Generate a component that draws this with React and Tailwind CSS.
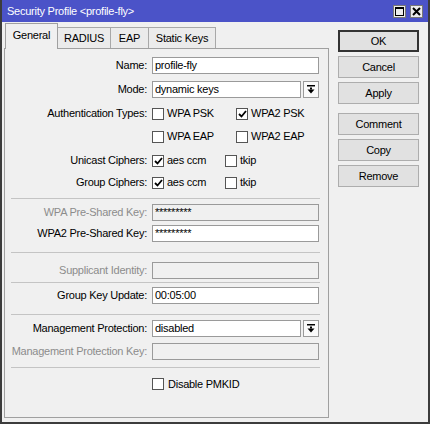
import React from "react";

const DropIcon = () => (
  <svg width="8" height="9" viewBox="0 0 8 9">
    <rect x="0" y="0" width="8" height="1.5" fill="#000" />
    <rect x="3" y="2.5" width="2" height="2" fill="#000" />
    <polygon points="0.5,4.5 7.5,4.5 4,8.5" fill="#000" />
  </svg>
);

const Check = ({ checked }) => (
  <div className="w-[12px] h-[12px] bg-white border border-[#555] flex items-center justify-center shrink-0">
    {checked && (
      <svg width="9" height="8" viewBox="0 0 9 8">
        <polyline points="1,4 3.5,6.5 8,1" fill="none" stroke="#000" strokeWidth="1.8" />
      </svg>
    )}
  </div>
);

const Label = ({ children, disabled }) => (
  <div className={`w-[143px] text-right pr-[1px] whitespace-nowrap ${disabled ? "text-[#8c8c8c]" : "text-black"}`}>
    {children}
  </div>
);

const Field = ({ label, value, disabled, drop, mt }) => (
  <div className={`flex items-center h-[17px] ${mt}`}>
    <Label disabled={disabled}>{label}</Label>
    <div className="ml-[4px] flex w-[167px] h-[17px]">
      <div
        className={`flex-1 h-full border border-[#9a9a9a] px-[2px] flex items-center leading-none ${
          disabled ? "bg-[#f0f0f0]" : "bg-white"
        }`}
      >
        {value}
      </div>
      {drop && (
        <div className="ml-[2px] w-[16px] h-full border border-[#9a9a9a] bg-[#fafafa] flex items-center justify-center">
          <DropIcon />
        </div>
      )}
    </div>
  </div>
);

const CheckRow = ({ label, items, mt }) => (
  <div className={`flex items-center h-[17px] ${mt}`}>
    <Label>{label}</Label>
    <div className="ml-[4px] flex items-center">
      {items.map((it) => (
        <div key={it.text} className={`flex items-center ${it.w}`}>
          <Check checked={it.checked} />
          <span className="ml-[3px] whitespace-nowrap">{it.text}</span>
        </div>
      ))}
    </div>
  </div>
);

const Sep = ({ mt }) => <div className={`ml-[6px] w-[309px] h-px bg-[#c4c4c4] ${mt}`} />;

const tabs = [
  { name: "General", w: "w-[53px]", active: true },
  { name: "RADIUS", w: "w-[54px] -ml-px" },
  { name: "EAP", w: "w-[39px] -ml-px" },
  { name: "Static Keys", w: "w-[68px] -ml-px" },
];

const buttons = [
  { name: "OK", mt: "", ok: true },
  { name: "Cancel", mt: "mt-[4px]" },
  { name: "Apply", mt: "mt-[4px]" },
  { name: "Comment", mt: "mt-[9px]" },
  { name: "Copy", mt: "mt-[4px]" },
  { name: "Remove", mt: "mt-[4px]" },
];

export default function App() {
  return (
    <div className="w-[430px] h-[424px] bg-[#f0f0f0] border-x-2 border-b-2 border-[#3c3c3c] flex flex-col font-['Liberation_Sans',Arial,sans-serif] text-[11px] tracking-[-0.25px] text-black overflow-hidden">
      {/* title bar */}
      <div className="h-[22px] bg-[#4b53c8] flex items-center shrink-0">
        <span className="ml-[5px] text-white whitespace-nowrap">Security Profile &lt;profile-fly&gt;</span>
        <div className="ml-auto mr-[5px] flex items-center gap-[4px]">
          <div className="w-[13px] h-[13px] bg-[#ececec] border border-[#777] flex items-center justify-center">
            <svg width="9" height="9" viewBox="0 0 9 9">
              <rect x="0.5" y="0.5" width="8" height="8" fill="none" stroke="#000" strokeWidth="1" />
              <rect x="0" y="0" width="9" height="2" fill="#000" />
            </svg>
          </div>
          <div className="w-[13px] h-[13px] bg-[#ececec] border border-[#777] flex items-center justify-center">
            <svg width="9" height="9" viewBox="0 0 9 9">
              <path d="M1 1 L8 8 M8 1 L1 8" stroke="#000" strokeWidth="2" />
            </svg>
          </div>
        </div>
      </div>

      <div className="flex flex-1">
        {/* left: tabs + panel */}
        <div className="ml-[2px] w-[325px] flex flex-col">
          <div className="h-[26px] flex items-end pl-px">
            {tabs.map((t) =>
              t.active ? (
                <div
                  key={t.name}
                  className={`${t.w} h-[26px] -mb-px relative z-10 bg-[#f0f0f0] border-x border-t border-[#a0a0a0] flex items-center justify-center pb-[3px]`}
                >
                  {t.name}
                </div>
              ) : (
                <div
                  key={t.name}
                  className={`${t.w} h-[21px] bg-[#ebebeb] border-x border-t border-[#a8a8a8] flex items-center justify-center`}
                >
                  {t.name}
                </div>
              )
            )}
          </div>
          <div className="h-[370px] border border-[#a0a0a0] bg-[#f0f0f0] flex flex-col">
            <Field label="Name:" value="profile-fly" mt="mt-[8px]" />
            <Field label="Mode:" value="dynamic keys" drop mt="mt-[7px]" />
            <CheckRow
              label="Authentication Types:"
              mt="mt-[7px]"
              items={[
                { text: "WPA PSK", w: "w-[84px]" },
                { text: "WPA2 PSK", checked: true },
              ]}
            />
            <CheckRow
              label=""
              mt="mt-[6px]"
              items={[
                { text: "WPA EAP", w: "w-[84px]" },
                { text: "WPA2 EAP" },
              ]}
            />
            <CheckRow
              label="Unicast Ciphers:"
              mt="mt-[7px]"
              items={[
                { text: "aes ccm", checked: true, w: "w-[73px]" },
                { text: "tkip" },
              ]}
            />
            <CheckRow
              label="Group Ciphers:"
              mt="mt-[5px]"
              items={[
                { text: "aes ccm", checked: true, w: "w-[73px]" },
                { text: "tkip" },
              ]}
            />
            <Sep mt="mt-[7px]" />
            <Field label="WPA Pre-Shared Key:" value="*********" disabled mt="mt-[5px]" />
            <Field label="WPA2 Pre-Shared Key:" value="*********" mt="mt-[4px]" />
            <Sep mt="mt-[10px]" />
            <Field label="Supplicant Identity:" value="" disabled mt="mt-[9px]" />
            <Sep mt="mt-[3px]" />
            <Field label="Group Key Update:" value="00:05:00" mt="mt-[4px]" />
            <Sep mt="mt-[10px]" />
            <Field label="Management Protection:" value="disabled" drop mt="mt-[5px]" />
            <Field label="Management Protection Key:" value="" disabled mt="mt-[6px]" />
            <Sep mt="mt-[7px]" />
            <div className="flex items-center h-[12px] mt-[10px] pl-[147px]">
              <Check />
              <span className="ml-[4px]">Disable PMKID</span>
            </div>
          </div>
        </div>

        {/* right: buttons */}
        <div className="ml-[9px] w-[81px] pt-[8px] flex flex-col">
          {buttons.map((b) => (
            <div
              key={b.name}
              className={`${b.mt} h-[22px] flex items-center justify-center bg-[#e1e1e1] ${
                b.ok ? "border-2 border-[#333]" : "border border-[#adadad]"
              }`}
            >
              {b.name}
            </div>
          ))}
        </div>
      </div>
    </div>
  );
}
